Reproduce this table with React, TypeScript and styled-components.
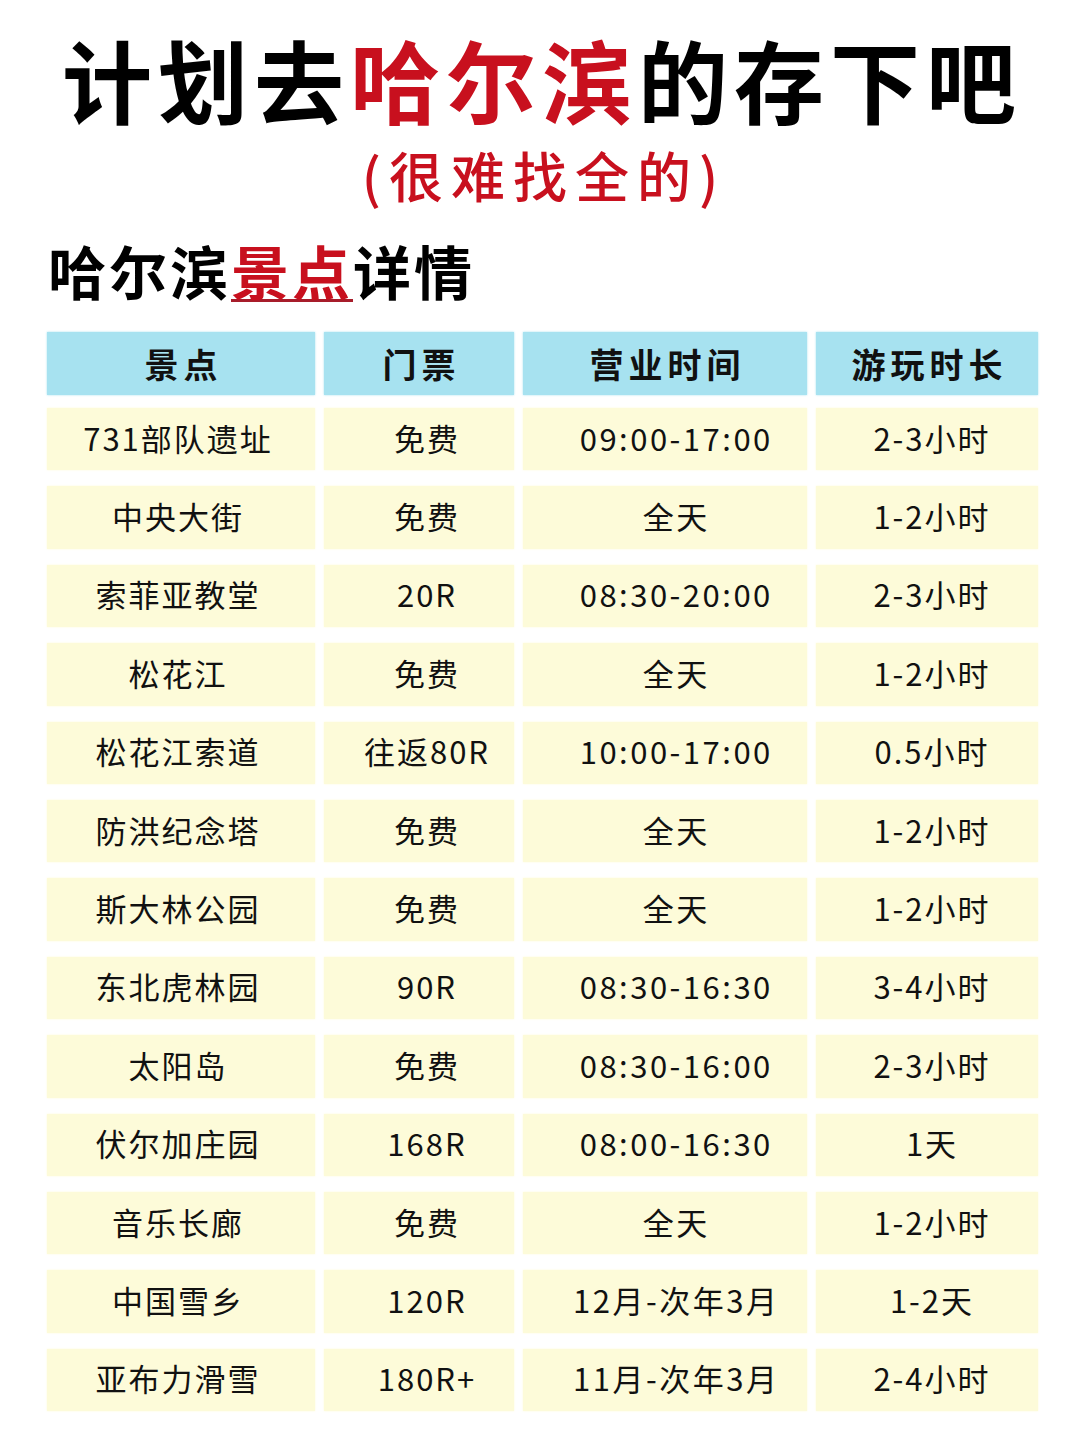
import React from 'react';
import styled, { createGlobalStyle } from 'styled-components';

const GlobalStyle = createGlobalStyle`
  body {
    margin: 0;
    background: #fff;
    font-family: "Noto Sans CJK SC", "Noto Sans", sans-serif;
  }
`;

const Page = styled.div`
  width: 1080px;
  min-height: 1440px;
  padding-top: 30px;
  box-sizing: border-box;
  background: #fff;
`;

const Title = styled.h1`
  margin: 0;
  text-align: center;
  font-size: 90px;
  line-height: 96px;
  font-weight: 700;
  letter-spacing: 6px;
  color: #000;
  padding-left: 4px;
`;

const Red = styled.span`
  color: #c8101e;
`;

const Subtitle = styled.div`
  margin-top: 19px;
  text-align: center;
  font-size: 54px;
  line-height: 60px;
  letter-spacing: 8px;
  color: #c8101e;
  font-weight: 500;
  padding-left: 8px;
`;

const SectionTitle = styled.h2`
  margin: 33px 0 0 48px;
  font-size: 58px;
  line-height: 64px;
  font-weight: 700;
  letter-spacing: 3px;
  color: #000;
`;

const Marked = styled.span`
  display: inline-block;
  line-height: 58px;
  color: #c8101e;
  border-bottom: 3px solid #a71d2b;
`;

const Table = styled.div`
  margin: 30px 0 0 47px;
  display: flex;
  flex-direction: column;
`;

const Row = styled.div<{ $head?: boolean }>`
  display: grid;
  grid-template-columns: 268px 190px 284px 222px;
  column-gap: 9px;
  height: ${(p) => (p.$head ? '63px' : '62.4px')};
`;

const Body = styled.div`
  margin-top: 13px;
  display: flex;
  flex-direction: column;
  gap: 16px;
`;

const HeadCell = styled.div`
  display: flex;
  align-items: center;
  justify-content: center;
  background: #a7e2f0;
  box-shadow: 0 0 2px #a7e2f0;
  font-size: 34px;
  font-weight: 700;
  letter-spacing: 5px;
  padding-left: 5px;
  color: #111;
`;

// shift moves the text centre sideways, as in the source picture
const Cell = styled.div<{ $shift: number; $spacing: number }>`
  display: flex;
  align-items: center;
  justify-content: center;
  box-sizing: border-box;
  padding-bottom: 4px;
  padding-left: ${(p) => Math.max(0, p.$shift * 2 + p.$spacing)}px;
  padding-right: ${(p) => Math.max(0, -p.$shift * 2 - p.$spacing)}px;
  background: #fdfbd9;
  box-shadow: 0 0 2px #fdfbd9;
  font-size: 31px;
  letter-spacing: ${(p) => p.$spacing}px;
  color: #111;
  white-space: nowrap;
`;

const headers = ['景点', '门票', '营业时间', '游玩时长'];
const shifts = [-4, 7, 10, 4];
const spacings = [2, 2, 2.5, 2];

const rows: string[][] = [
  ['731部队遗址', '免费', '09:00-17:00', '2-3小时'],
  ['中央大街', '免费', '全天', '1-2小时'],
  ['索菲亚教堂', '20R', '08:30-20:00', '2-3小时'],
  ['松花江', '免费', '全天', '1-2小时'],
  ['松花江索道', '往返80R', '10:00-17:00', '0.5小时'],
  ['防洪纪念塔', '免费', '全天', '1-2小时'],
  ['斯大林公园', '免费', '全天', '1-2小时'],
  ['东北虎林园', '90R', '08:30-16:30', '3-4小时'],
  ['太阳岛', '免费', '08:30-16:00', '2-3小时'],
  ['伏尔加庄园', '168R', '08:00-16:30', '1天'],
  ['音乐长廊', '免费', '全天', '1-2小时'],
  ['中国雪乡', '120R', '12月-次年3月', '1-2天'],
  ['亚布力滑雪', '180R+', '11月-次年3月', '2-4小时'],
];

export default function App() {
  return (
    <Page>
      <GlobalStyle />
      <Title>
        计划去<Red>哈尔滨</Red>的存下吧
      </Title>
      <Subtitle>(很难找全的)</Subtitle>
      <SectionTitle>
        哈尔滨<Marked>景点</Marked>详情
      </SectionTitle>
      <Table>
        <Row $head>
          {headers.map((h) => (
            <HeadCell key={h}>{h}</HeadCell>
          ))}
        </Row>
        <Body>
          {rows.map((r) => (
            <Row key={r[0]}>
              {r.map((c, i) => (
                <Cell key={i} $shift={shifts[i]} $spacing={spacings[i]}>
                  {c}
                </Cell>
              ))}
            </Row>
          ))}
        </Body>
      </Table>
    </Page>
  );
}
